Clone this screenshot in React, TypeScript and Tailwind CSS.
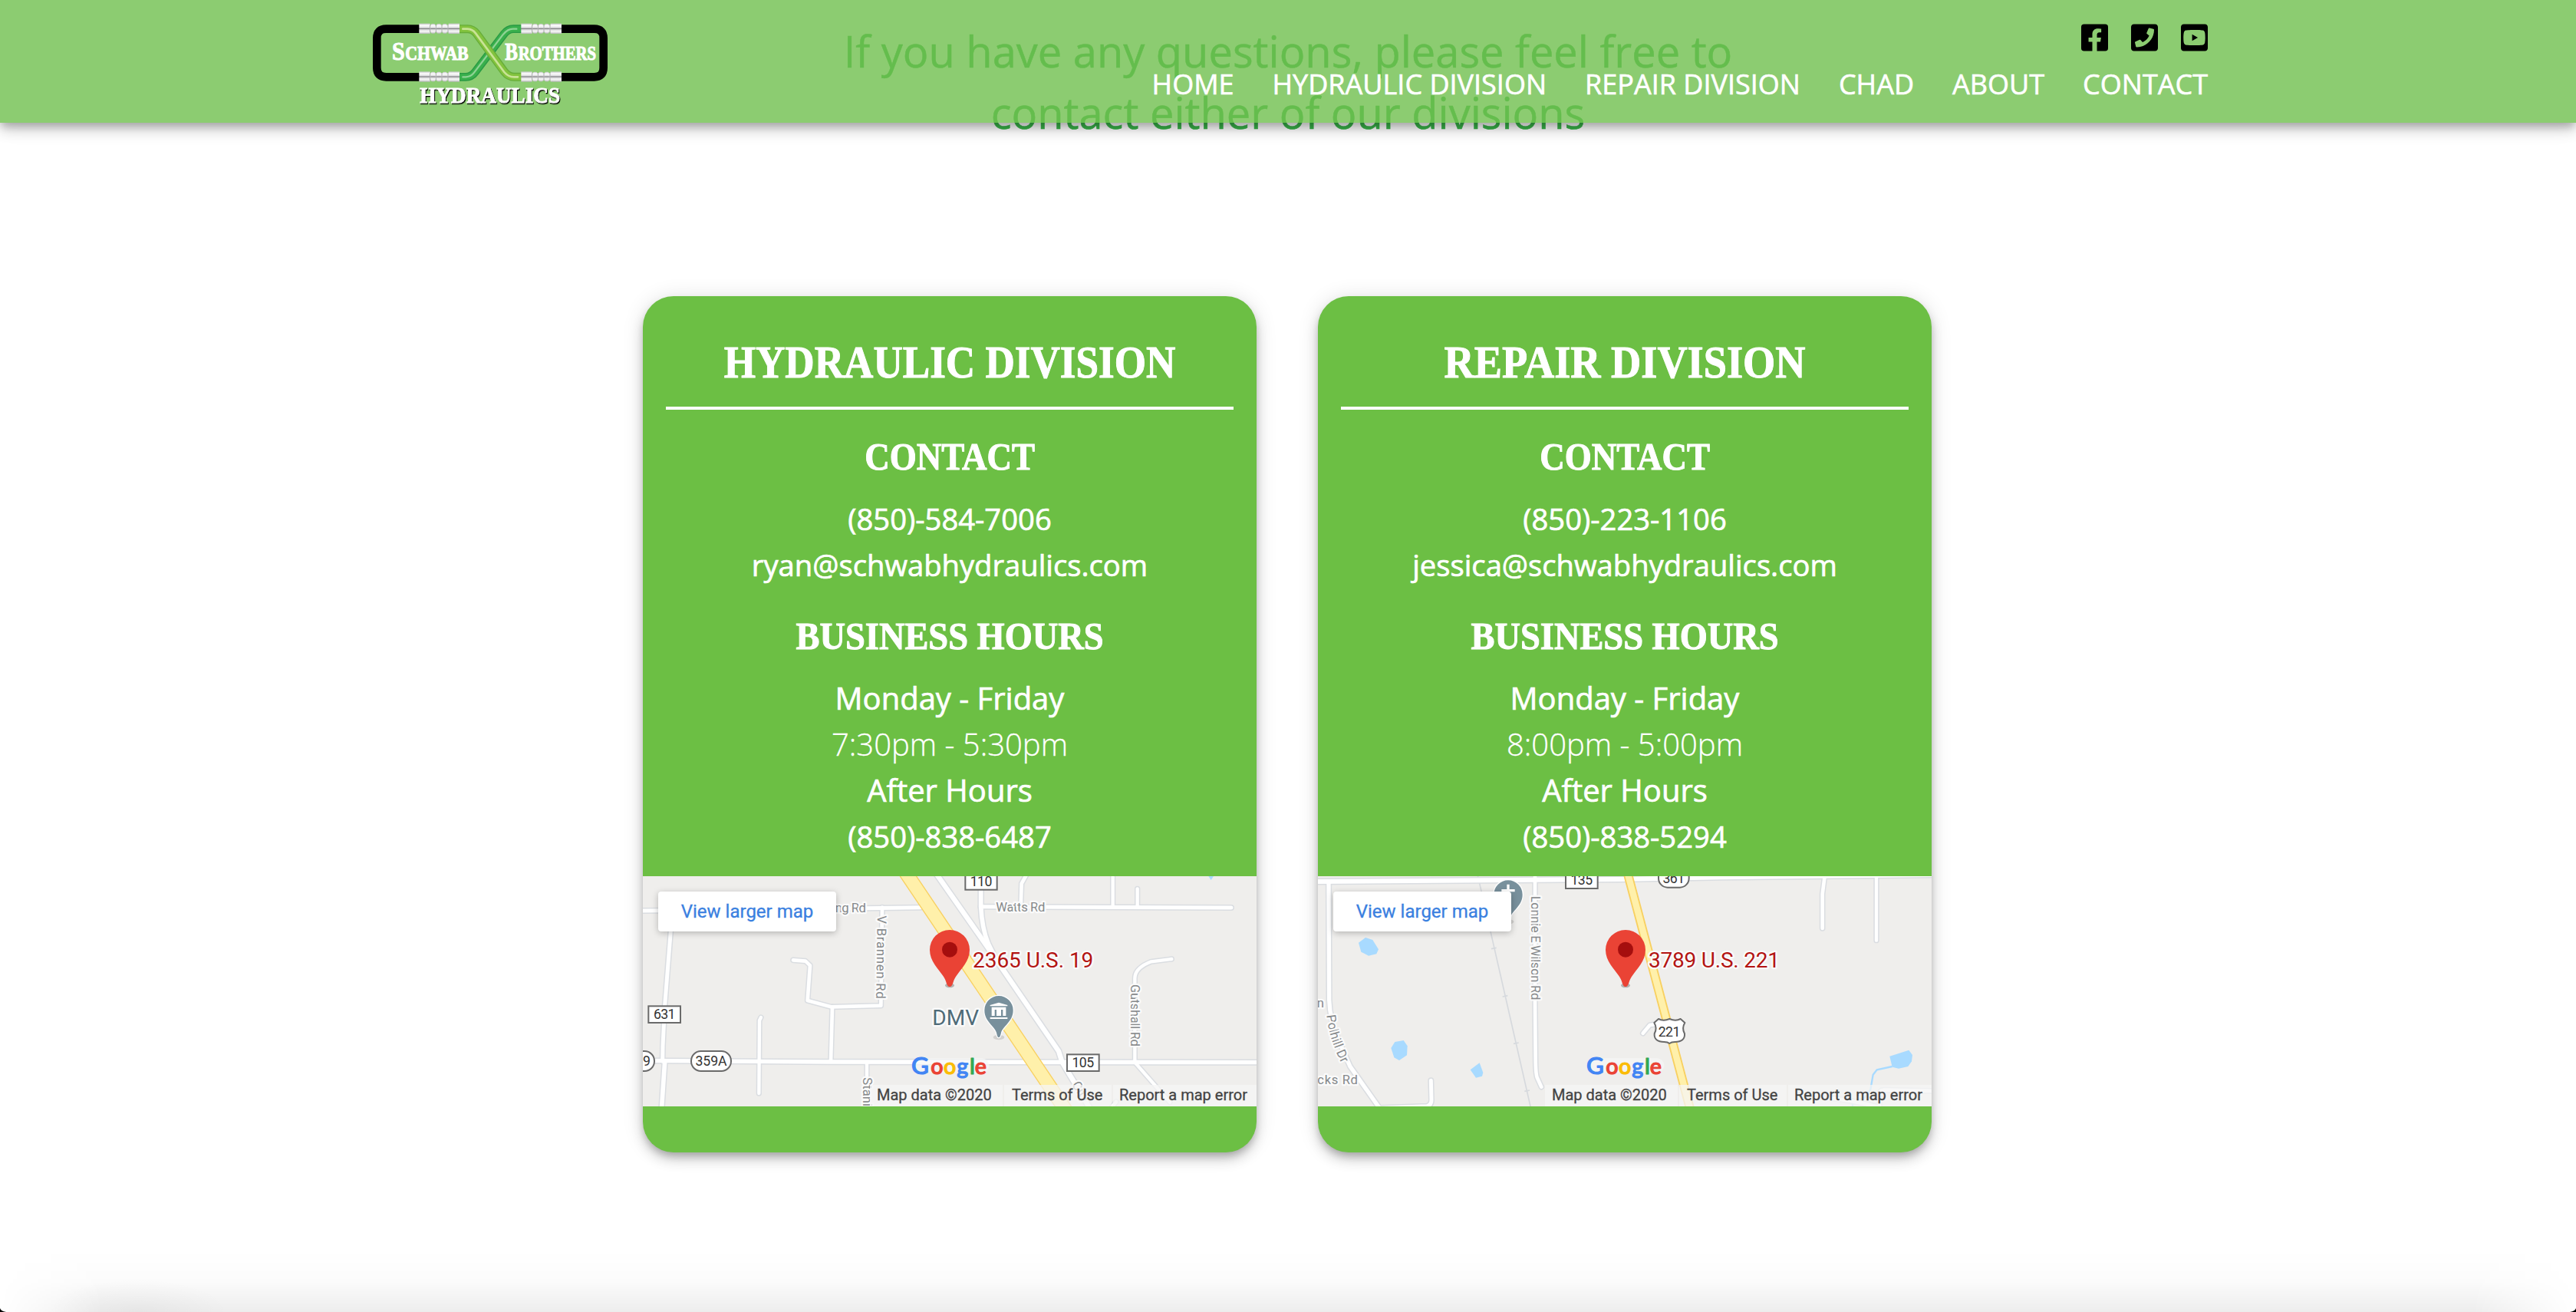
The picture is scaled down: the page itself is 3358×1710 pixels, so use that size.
import type { ReactNode } from "react";
import { FaFacebookSquare, FaPhoneSquare, FaYoutubeSquare } from "react-icons/fa";

const NAV = ["HOME", "HYDRAULIC DIVISION", "REPAIR DIVISION", "CHAD", "ABOUT", "CONTACT"];

function Ferrule({ x, y }: { x: number; y: number }) {
  return (
    <g transform={`translate(${x} ${y})`}>
      <rect x="0" y="0" width="43" height="40" fill="url(#metal)" />
      <rect x="43" y="5" width="74" height="30" fill="url(#metal)" />
      {[47, 70, 93].map((r) => (
        <rect key={r} x={r} y="1" width="15" height="38" rx="3" fill="url(#metal)" />
      ))}
      <rect x="115" y="0" width="43" height="40" fill="url(#metal)" />
      <path d="M43 6v28M66 6v28M89 6v28M113 6v28" stroke="#a9a9ac" strokeWidth="3" />
    </g>
  );
}

function Logo() {
  return (
    <svg viewBox="60 60 960 330" className="h-[110px] w-[320px]">
      <defs>
        <linearGradient id="metal" x1="0" y1="0" x2="0" y2="1">
          <stop offset="0" stopColor="#c9c9cb" />
          <stop offset="0.2" stopColor="#ffffff" />
          <stop offset="0.42" stopColor="#d8d8da" />
          <stop offset="0.5" stopColor="#77777a" />
          <stop offset="0.6" stopColor="#dedee0" />
          <stop offset="0.8" stopColor="#f6f6f6" />
          <stop offset="1" stopColor="#b5b5b8" />
        </linearGradient>
      </defs>
      <g fill="none" strokeLinejoin="round">
        <path d="M262 83H130Q94 83 94 119V235Q94 271 130 271H262" stroke="#000" strokeWidth="32" />
        <path d="M812 83H944Q980 83 980 119V235Q980 271 944 271H812" stroke="#000" strokeWidth="32" />
        <path d="M412 271H440Q464 271 478 252L590 104Q606 83 628 83H660" stroke="#2a9a45" strokeWidth="32" />
        <path d="M412 271H440Q464 271 478 252L590 104Q606 83 628 83H660" stroke="#39b04c" strokeWidth="24" />
        <path d="M430 271H442Q462 270 474 254L588 104Q606 83 626 83H640" stroke="#8fd394" strokeWidth="7" strokeLinecap="round" />
        <path d="M412 83H448Q470 83 484 102L592 250Q608 271 632 271H662" stroke="#67ad3a" strokeWidth="33" />
        <path d="M412 83H448Q470 83 484 102L592 250Q608 271 632 271H662" stroke="#83c33e" strokeWidth="25" />
        <path d="M430 83H448Q468 84 480 100L592 252Q608 271 630 271H645" stroke="#c9e396" strokeWidth="8" strokeLinecap="round" />
      </g>
      <Ferrule x={259} y={62} />
      <Ferrule x={259} y={250} />
      <Ferrule x={658} y={62} />
      <Ferrule x={658} y={250} />
      <g fill="#fff" stroke="#fff" strokeWidth="3" className="font-['Liberation_Serif'] font-bold">
        <text x="153" y="205" fontSize="98" textLength="50" lengthAdjust="spacingAndGlyphs">S</text>
        <text x="205" y="205" fontSize="76" textLength="247" lengthAdjust="spacingAndGlyphs">CHWAB</text>
        <text x="595" y="205" fontSize="92" textLength="50" lengthAdjust="spacingAndGlyphs">B</text>
        <text x="647" y="205" fontSize="76" textLength="304" lengthAdjust="spacingAndGlyphs">ROTHERS</text>
        <text x="262" y="373" fontSize="91" textLength="548" lengthAdjust="spacingAndGlyphs" className="[filter:drop-shadow(3px_4px_0_#000)]">HYDRAULICS</text>
      </g>
    </svg>
  );
}

function Header() {
  return (
    <header className="absolute inset-x-0 top-0 z-20 h-[160px] bg-[#6fbf4d]/80 shadow-[0_6px_10px_-2px_rgba(0,0,0,0.2),0_10px_16px_0_rgba(0,0,0,0.14),0_2px_28px_0_rgba(0,0,0,0.12)]">
      <div className="mx-auto flex w-[2398px] justify-between">
        <div className="pt-[30px]">
          <Logo />
        </div>
        <div className="flex flex-col items-end pt-[29px]">
          <div className="flex gap-[30px] text-black">
            <FaFacebookSquare className="h-10 w-[35px]" />
            <FaPhoneSquare className="h-10 w-[35px]" />
            <FaYoutubeSquare className="h-10 w-[35px]" />
          </div>
          <nav className="mt-[17px] flex gap-[50px] text-[36px] leading-[48px] text-white [-webkit-text-stroke:0.6px_currentColor]">
            {NAV.map((n) => (
              <a key={n} href="#">{n}</a>
            ))}
          </nav>
        </div>
      </div>
    </header>
  );
}

/* Draws every road twice so junctions merge: grey casing first, white fill above. */
function Roads({ roads }: { roads: [string, number][] }) {
  return (
    <g fill="none" strokeLinejoin="round" strokeLinecap="round">
      <g stroke="#dadde1">
        {roads.map(([d, w]) => (
          <path key={d} d={d} strokeWidth={w + 9} />
        ))}
      </g>
      <g stroke="#fff">
        {roads.map(([d, w]) => (
          <path key={d} d={d} strokeWidth={w} />
        ))}
      </g>
    </g>
  );
}

function Label({ x, y, size = 50, len, rotate = 0, fill = "#85888a", children }: { x: number; y: number; size?: number; len?: number; rotate?: number; fill?: string; children: ReactNode }) {
  return (
    <text
      transform={`translate(${x} ${y}) rotate(${rotate})`}
      fontSize={size}
      textLength={len}
      fill={fill}
      stroke="#fafafa"
      strokeWidth="14"
      strokeLinejoin="round"
      paintOrder="stroke"
    >
      {children}
    </text>
  );
}

function Plate({ x, y, w, h, r = 0, text, size = 53, base, len }: { x: number; y: number; w: number; h: number; r?: number; text: string; size?: number; base: number; len: number }) {
  return (
    <g>
      <rect x={x + 3} y={y + 3} width={w - 6} height={h - 6} rx={r} fill="#fff" stroke="#6a6a6a" strokeWidth="6" />
      <text x={x + w / 2} y={base} textAnchor="middle" fontSize={size} textLength={len} fill="#333">{text}</text>
    </g>
  );
}

function Pin({ x }: { x: number }) {
  return (
    <g transform={`translate(${x} 0)`}>
      <ellipse cx="0" cy="463" rx="18" ry="9" fill="#000" opacity="0.25" />
      <path d="M0 468C-8 468 -11 460 -15 447C-26 412 -78 380 -78 324A78 78 0 0 1 78 324C78 380 26 412 15 447C11 460 8 468 0 468Z" fill="#ea4335" />
      <circle cx="0" cy="323" r="30" fill="#a50e0e" />
    </g>
  );
}

function GreyPin({ x, y, children }: { x: number; y: number; children: ReactNode }) {
  return (
    <g transform={`translate(${x} ${y})`}>
      <ellipse cx="0" cy="106" rx="22" ry="10" fill="#000" opacity="0.12" />
      <path d="M0 106C-5 106 -7 98 -9 88C-15 62 -56 45 -56 0A56 56 0 0 1 56 0C56 45 15 62 9 88C7 98 5 106 0 106Z" fill="#78909c" stroke="#fff" strokeWidth="8" paintOrder="stroke" />
      {children}
    </g>
  );
}

function GoogleMark() {
  const letters: [string, number, string, number][] = [
    ["G", 1104, "#4285f4", 94],
    ["o", 1180, "#ea4335", 86],
    ["o", 1230, "#fbbc05", 86],
    ["g", 1282, "#4285f4", 86],
    ["l", 1332, "#34a853", 86],
    ["e", 1352, "#ea4335", 86],
  ];
  return (
    <g className="font-['Lato'] font-medium" strokeLinejoin="round">
      <path d="M1142 776H1380" stroke="#f7f7f7" strokeWidth="56" strokeLinecap="round" opacity="0.7" />
      {letters.map(([c, x, fill, size], i) => (
        <text key={i} x={x} y="809" fontSize={size} fill={fill} stroke={fill} strokeWidth="3.5">{c}</text>
      ))}
    </g>
  );
}

function MapFrame({ children }: { children: ReactNode }) {
  return (
    <div className="relative h-[300px] w-[800px] overflow-hidden bg-[#efeeec] text-left font-['Roboto']">
      <svg viewBox="54 36 2400 900" className="block h-[300px] w-[800px]">
        {children}
        <GoogleMark />
      </svg>
      <a href="#" className="absolute top-5 left-5 flex h-[52px] w-[232px] items-center justify-center rounded-[4px] bg-white text-[24px] text-[#3a80e0] shadow-[0_2px_8px_rgba(0,0,0,0.25)] [-webkit-text-stroke:0.3px_currentColor]">
        View larger map
      </a>
      <div className="absolute right-0 bottom-0 flex h-7 gap-[2px] text-[20px] leading-[26px] whitespace-nowrap text-[#444] [-webkit-text-stroke:0.3px_currentColor]">
        <span className="w-[173px] bg-[#f5f5f5]/75 pl-[9px]">Map data ©2020</span>
        <span className="w-[140px] bg-[#f5f5f5]/75 pl-[10px]">Terms of Use</span>
        <span className="w-[187px] bg-[#f5f5f5]/75 pl-[8px]">Report a map error</span>
      </div>
    </div>
  );
}

function HydraulicMap() {
  const roads: [string, number][] = [
    ["M40 171L600 166L1140 158", 15],
    ["M1375 155L2355 159", 15],
    ["M167 170L163 250L140 540L132 700L131 760", 15],
    ["M140 760L127 950", 17],
    ["M40 757L788 762L2480 764", 16],
    ["M642 364L690 368L708 385L698 522L790 547L985 542L990 158", 14],
    ["M795 547L789 760", 14],
    ["M516 588L510 600L508 885", 13],
    ["M930 762V950", 13],
    ["M1560 20L1535 65L1532 155", 14],
    ["M1892 20V155", 13],
    ["M1988 85V155", 13],
    ["M2122 360L2042 370Q1978 395 1978 435V764L2115 920", 13],
    ["M1880 950L1905 918", 14],
    ["M1376 20V155Q1380 240 1405 300L1430 350", 17],
    ["M1197 20L1400 310L1680 720L1694 764L1740 840L1812 960", 19],
  ];
  return (
    <MapFrame>
      <path d="M2266 36H2286L2276 51Z" fill="#a8daff" />
      <Roads roads={roads} />
      <path d="M1081 20L1714 960" stroke="#f8d060" strokeWidth="57" fill="none" />
      <path d="M1081 20L1714 960" stroke="#fff0aa" strokeWidth="49" fill="none" />
      <Label x={806} y={178} len={121}>ng Rd</Label>
      <Label x={971} y={190} rotate={90.8} len={325}>V Brannen Rd</Label>
      <Label x={914} y={823} rotate={90}>Stani</Label>
      <Label x={1435} y={173} len={192}>Watts Rd</Label>
      <Label x={1962} y={459} rotate={90} len={243}>Gutshall Rd</Label>
      <Label x={1730} y={852} rotate={56}>City</Label>
      <Plate x={1312} y={22} w={130} h={70} text="110" base={75} len={86} />
      <Plate x={73} y={541} w={131} h={71} text="631" base={595} len={85} />
      <Plate x={1710} y={730} w={131} h={71} text="105" base={784} len={86} />
      <Plate x={240} y={717} w={162} h={84} r={38} text="359A" base={778} len={123} />
      <Plate x={-60} y={717} w={162} h={84} r={38} text="" base={778} len={0} />
      <text x="54" y="778" fontSize="53" fill="#333">9</text>
      <Label x={1186} y={617} size={84} len={182} fill="#4f6b78">DMV</Label>
      <GreyPin x={1446} y={560}>
        <path d="M-34 -16V-20L0 -30L34 -20V-16ZM-28 -12H28V22H16V-2H9V22H-9V-2H-16V22H-28ZM-34 28H34V34H-34Z" fill="#fff" />
      </GreyPin>
      <Label x={1344} y={392} size={84} len={472} fill="#b31412">2365 U.S. 19</Label>
      <Pin x={1254} />
    </MapFrame>
  );
}

function RepairMap() {
  const roads: [string, number][] = [
    ["M40 57L1230 48L1630 40L2480 30", 18],
    ["M96 60L98 520Q100 600 140 690L180 780L300 950", 16],
    ["M285 943L480 935Q498 932 498 910L496 835", 15],
    ["M903 20V520L905 740Q905 810 912 825L928 860", 14],
    ["M2038 20L2027 105V240", 14],
    ["M2238 20V287", 13],
    ["M1325 650L1352 618L1385 614", 14],
    ["M2070 905Q2160 915 2250 940V890Q2250 872 2270 872L2480 876", 14],
  ];
  return (
    <MapFrame>
      <g stroke="#d6d9dd" strokeWidth="5" fill="none">
        <path d="M676 20L886 940" />
        <path d="M732 320L752 316M776 507L796 503M819 691L839 687M862 877L882 873" />
      </g>
      <g fill="#a8daff">
        <path d="M213 296L240 276L268 285L291 322L283 340L252 347L223 332Z" />
        <path d="M340 708L355 684L389 678L404 700L402 736L372 756L352 745Z" />
        <path d="M650 793L686 766L700 804L696 818L672 824Z" />
        <path d="M2290 740L2365 716L2379 735L2376 760L2362 780L2325 788L2300 782Z" />
      </g>
      <path d="M2300 780L2240 793L2225 812L2215 870L2190 905L2145 914V940" stroke="#a8daff" strokeWidth="7" fill="none" />
      <Roads roads={roads} />
      <path d="M1264 20L1512 955" stroke="#f8d060" strokeWidth="36" />
      <path d="M1264 20L1512 955" stroke="#fff0aa" strokeWidth="25" />
      <Label x={50} y={550}>n</Label>
      <Label x={888} y={113} rotate={90} len={407}>Lonnie E Wilson Rd</Label>
      <path id="polhill" d="M88 580Q98 680 158 790" fill="none" />
      <text fontSize="50" fill="#85888a" stroke="#fafafa" strokeWidth="14" strokeLinejoin="round" paintOrder="stroke">
        <textPath href="#polhill">Polhill Dr</textPath>
      </text>
      <Label x={52} y={850} len={158}>cks Rd</Label>
      <Plate x={1020} y={16} w={131} h={71} text="135" base={70} len={86} />
      <Plate x={1383} y={0} w={125} h={83} r={36} text="361" base={63} len={86} />
      <path d="M1386 594Q1405 604 1429 594Q1453 604 1472 594L1489 609Q1476 630 1488 652Q1490 684 1450 684Q1436 684 1429 690Q1422 684 1408 684Q1368 684 1370 652Q1382 630 1369 609Z" fill="#fff" stroke="#6a6a6a" strokeWidth="6" strokeLinejoin="round" />
      <text x="1428" y="663" textAnchor="middle" fontSize="53" textLength="86" fill="#333">221</text>
      <GreyPin x={798} y={108}>
        <path d="M-5 -40H5V-21H26V-11H5V20H-5V-11H-26V-21H-5Z" fill="#fff" />
      </GreyPin>
      <Label x={1347} y={392} size={84} len={513} fill="#b31412">3789 U.S. 221</Label>
      <Pin x={1257} />
    </MapFrame>
  );
}

interface Division {
  title: string;
  phone: string;
  email: string;
  hours: string;
  after: string;
  map: ReactNode;
  titleScale: string;
}

function Card({ d }: { d: Division }) {
  return (
    <section className="flex h-[1116px] w-[800px] flex-col items-center rounded-[40px] bg-[#6cbf44] pt-14 text-center text-[40px] leading-[60px] text-white shadow-[0_6px_10px_-2px_rgba(0,0,0,0.2),0_10px_16px_0_rgba(0,0,0,0.14),0_2px_28px_0_rgba(0,0,0,0.12)]">
      <h2 className={`font-['Liberation_Serif'] text-[59px] leading-[60px] font-bold whitespace-nowrap [-webkit-text-stroke:1px_currentColor] ${d.titleScale}`}>{d.title}</h2>
      <div className="mt-7 h-1 w-[740px] shrink-0 bg-white" />
      <h3 className="mt-[31px] scale-x-[0.9] font-['Liberation_Serif'] text-[50px] leading-[60px] font-bold [-webkit-text-stroke:1px_currentColor]">CONTACT</h3>
      <a href="#" className="mt-[21px] text-[38.2px] [-webkit-text-stroke:0.7px_currentColor]">{d.phone}</a>
      <a href="#" className="text-[38.2px] [-webkit-text-stroke:0.7px_currentColor]">{d.email}</a>
      <h3 className="mt-[33px] scale-x-[0.928] font-['Liberation_Serif'] text-[50px] leading-[60px] font-bold [-webkit-text-stroke:1px_currentColor]">BUSINESS HOURS</h3>
      <p className="mt-[21px] [-webkit-text-stroke:0.7px_currentColor]">Monday - Friday</p>
      <p className="font-light [-webkit-text-stroke:0.3px_currentColor]">{d.hours}</p>
      <p className="[-webkit-text-stroke:0.7px_currentColor]">After Hours</p>
      <a href="#" className="mb-[22px] text-[38.2px] [-webkit-text-stroke:0.7px_currentColor]">{d.after}</a>
      {d.map}
    </section>
  );
}

const DIVISIONS: Division[] = [
  {
    title: "HYDRAULIC DIVISION",
    phone: "(850)-584-7006",
    email: "ryan@schwabhydraulics.com",
    hours: "7:30pm - 5:30pm",
    after: "(850)-838-6487",
    map: <HydraulicMap />,
    titleScale: "scale-x-[0.9]",
  },
  {
    title: "REPAIR DIVISION",
    phone: "(850)-223-1106",
    email: "jessica@schwabhydraulics.com",
    hours: "8:00pm - 5:00pm",
    after: "(850)-838-5294",
    map: <RepairMap />,
    titleScale: "scale-x-[0.92]",
  },
];

export default function App() {
  return (
    <div className="relative h-[1710px] w-[3358px] overflow-hidden bg-white font-['Open_Sans',sans-serif]">
      <Header />
      <main className="flex flex-col items-center pt-[26px]">
        <p className="h-[360px] w-[1200px] text-center text-[56px] leading-[80px] text-[#39b54a] [-webkit-text-stroke:0.5px_currentColor]">
          If you have any questions, please feel free to contact either of our divisions
        </p>
        <div className="mr-[2px] flex gap-20">
          {DIVISIONS.map((d) => (
            <Card key={d.title} d={d} />
          ))}
        </div>
      </main>
      <div className="pointer-events-none absolute inset-x-0 bottom-0 h-[80px] bg-linear-to-b from-transparent via-black/[0.015] to-black/[0.07] mask-x-from-96% mask-x-to-100%" />
      <div className="pointer-events-none absolute bottom-0 left-[60px] h-[44px] w-[240px] bg-[radial-gradient(ellipse_at_bottom,rgba(0,0,0,0.035),transparent_70%)]" />
      <svg viewBox="0 0 8 5" className="absolute bottom-0 left-0 h-[5px] w-2"><path d="M0 0Q1 4 8 5H0Z" /></svg>
      <svg viewBox="0 0 8 5" className="absolute right-0 bottom-0 h-[5px] w-2"><path d="M8 0Q7 4 0 5H8Z" /></svg>
    </div>
  );
}
